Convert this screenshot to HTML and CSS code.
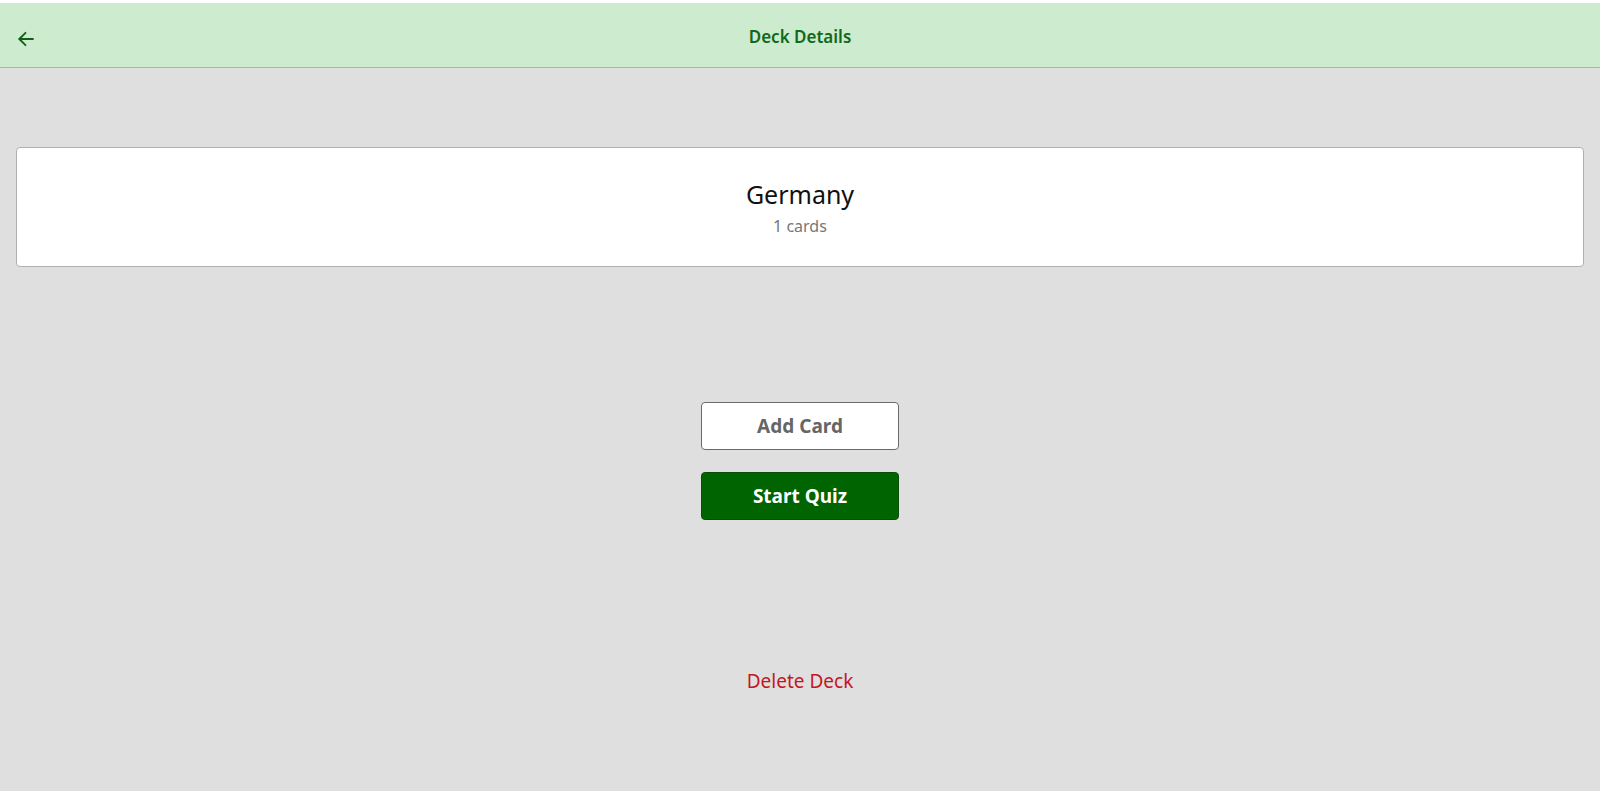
FILE: index.html
```html
<!DOCTYPE html>
<html>
<head>
<meta charset="utf-8">
<link rel="stylesheet" href="styles.css">
</head>
<body>
<div class="topstrip"></div>
<header class="appbar">
  <button class="back" aria-label="Back">
    <svg width="16" height="16" viewBox="0 0 16 16" fill="none" stroke="#0f5f14" stroke-width="1.8" stroke-linecap="round" stroke-linejoin="round"><path d="M15 8H1.5"/><path d="M7.5 1.8L1.3 8l6.2 6.2"/></svg>
  </button>
  <h1 class="title">Deck Details</h1>
</header>
<main class="content">
  <section class="deck-card">
    <div class="deck-name">Germany</div>
    <div class="deck-count">1 cards</div>
  </section>
  <div class="actions">
    <button class="btn btn-outline">Add Card</button>
    <button class="btn btn-primary">Start Quiz</button>
  </div>
  <button class="delete">Delete Deck</button>
</main>
</body>
</html>
```

FILE: styles.css
```css
html, body {
  margin: 0;
  padding: 0;
  background: #dfdfdf;
  font-family: "Noto Sans", "Open Sans", sans-serif;
  min-height: 100%;
}
body {
  min-height: 791px;
}
.topstrip {
  height: 3px;
  background: #ffffff;
}
.appbar {
  height: 64px;
  background: #cdebcf;
  border-bottom: 1px solid #a9b5aa;
  display: flex;
  align-items: center;
  justify-content: center;
  position: relative;
}
.back {
  position: absolute;
  left: 18px;
  top: 28px;
  width: 16px;
  height: 16px;
  padding: 0;
  border: none;
  background: none;
  display: flex;
}
.title {
  margin: 2px 0 0;
  font-size: 17px;
  font-weight: 600;
  color: #12691a;
}
.content {
  padding: 79px 16px 0;
  display: flex;
  flex-direction: column;
  align-items: center;
}
.deck-card {
  align-self: stretch;
  height: 118px;
  background: #ffffff;
  border: 1px solid #b0b0b0;
  border-radius: 4px;
  display: flex;
  flex-direction: column;
  align-items: center;
  justify-content: center;
}
.deck-name {
  font-size: 25px;
  line-height: 32px;
  color: #111111;
}
.deck-count {
  margin-top: 5px;
  font-size: 16px;
  line-height: 22px;
  color: #777777;
}
.actions {
  margin-top: 135px;
  display: flex;
  flex-direction: column;
  align-items: center;
  gap: 22px;
}
.btn {
  width: 198px;
  height: 48px;
  border-radius: 4px;
  font-family: inherit;
  font-size: 19px;
  font-weight: 700;
  cursor: pointer;
}
.btn-outline {
  background: #ffffff;
  border: 1px solid #6b6b6b;
  color: #666666;
}
.btn-primary {
  background: #006400;
  border: 1px solid #0a4d0a;
  color: #ffffff;
}
.delete {
  margin-top: 148px;
  border: none;
  background: none;
  padding: 0;
  font-family: inherit;
  font-size: 19px;
  line-height: 26px;
  color: #c4161f;
}
```
